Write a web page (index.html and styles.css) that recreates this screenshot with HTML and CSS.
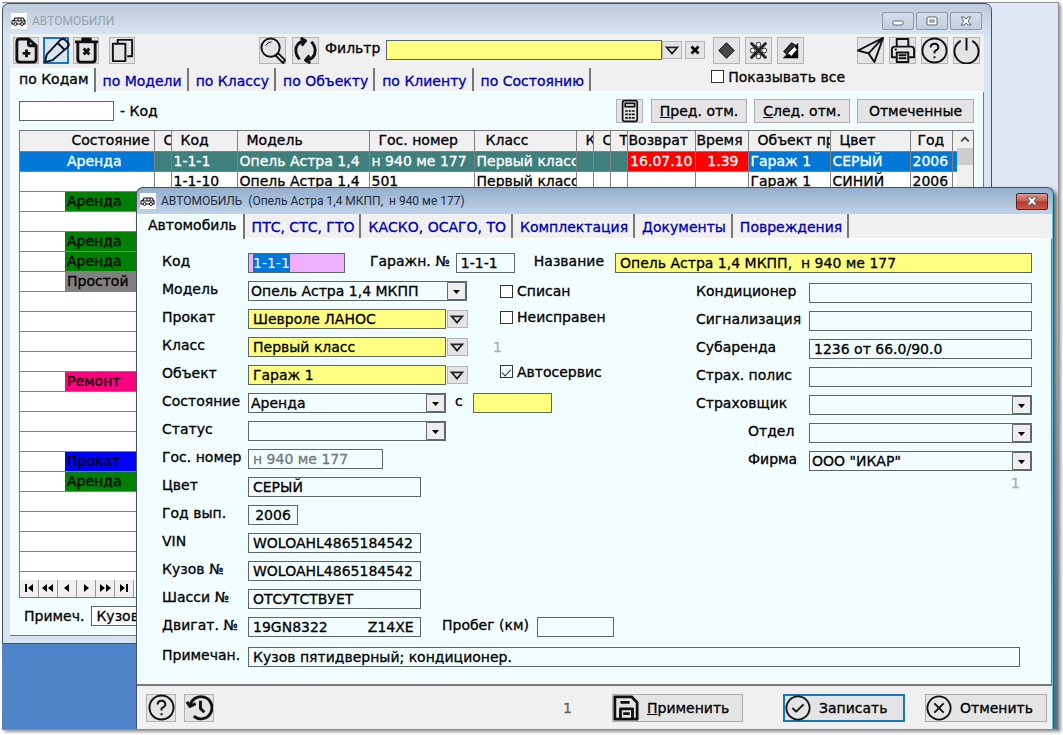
FILE: index.html
```html
<!DOCTYPE html>
<html lang="ru">
<head>
<meta charset="utf-8">
<title>Автомобили</title>
<link rel="stylesheet" href="styles.css">
</head>
<body>
<svg class="defs" aria-hidden="true">
  <symbol id="car" viewBox="0 0 16 16"><path d="M4 5h8l2 3v3H1V8l2-1zM4 5l-1 3h11M7 5v3M10 5v3" fill="none" stroke="#111" stroke-width="1.1"/><circle cx="4.500" cy="11" r="1.500" fill="#fff" stroke="#111"/><circle cx="11" cy="11" r="1.500" fill="#fff" stroke="#111"/></symbol>
  <symbol id="new" viewBox="0 0 28 28"><path d="M16 2H7Q4 2 4 5V23Q4 26 7 26H21Q24 26 24 23V9ZM16 2V7Q16 9 18 9H24M14 13V21M10 17H18" class="k3"/></symbol>
  <symbol id="edit" viewBox="0 0 28 28"><path d="M2 26L4 18L18 3Q20 1 23 3L26 6Q28 8 25 11L10 24ZM15 6L22 13" class="k2"/></symbol>
  <symbol id="trash" viewBox="0 0 28 28"><path d="M2 5H26M10 4V2H18V4M5 6V23Q5 26 8 26H20Q23 26 23 23V6M11 12L17 18M17 12L11 18" class="k3"/></symbol>
  <symbol id="copy" viewBox="0 0 28 28"><path d="M9 7V3H24V20H19M4 7H17V25H4Z" class="k2"/></symbol>
  <symbol id="find" viewBox="0 0 28 28"><circle cx="12" cy="11" r="9.500" class="k2"/><path d="M7 9Q9 5 13 5" class="k1"/><path d="M17 19L20 17L27 24L25 27Z" class="k2"/></symbol>
  <symbol id="reload" viewBox="0 0 28 28"><path d="M12 4Q4 6 4 14Q4 19 8 23M9 1L14 4L10 9M16 24Q24 22 24 14Q24 9 20 5M19 27L14 24L18 19" class="k3"/></symbol>
  <symbol id="tri" viewBox="0 0 20 18"><path d="M4 6H16L10 13Z" fill="#ddd" stroke="#222" stroke-width="2"/></symbol>
  <symbol id="cross" viewBox="0 0 20 18"><path d="M6 5L14 13M14 5L6 13" stroke="#000" stroke-width="3"/></symbol>
  <symbol id="diamond" viewBox="0 0 28 28"><path d="M14 6L22 14L14 22L6 14Z" fill="#484848" stroke="#000"/></symbol>
  <symbol id="unmark" viewBox="0 0 28 28"><g fill="#fff" stroke="#222"><circle cx="14" cy="8" r="2.500"/><circle cx="8" cy="14" r="2.500"/><circle cx="20" cy="14" r="2.500"/><circle cx="14" cy="20" r="2.500"/></g><path d="M6 6L22 22M22 6L6 22" stroke="#222" stroke-width="3"/></symbol>
  <symbol id="invert" viewBox="0 0 28 28"><path d="M6 22H22V6L14 14Z" fill="#000"/><path d="M7 15L15 6L20 9L11 19Z" fill="#333" stroke="#000"/><path d="M11 17L18 10L21 13L15 20Z" fill="#fff" stroke="#222"/></symbol>
  <symbol id="send" viewBox="0 0 28 28"><path d="M1 14L27 1L18 26L12 17ZM12 17L27 1" class="k2"/></symbol>
  <symbol id="print" viewBox="0 0 28 28"><path d="M8 10V2H20V10M7 21H3V13Q3 10 6 10H23Q26 10 26 13V21H21M8 16H20V26H8ZM10 19H18M10 22H18M6 13H8" class="k2"/></symbol>
  <symbol id="help" viewBox="0 0 28 28"><circle cx="14" cy="14" r="12.500" class="k2"/><path d="M10 11Q10 7 14 7Q18 7 18 11Q18 13 14 15V17M14 20V22" class="k2"/></symbol>
  <symbol id="power" viewBox="0 0 28 28"><path d="M8 4A12.500 12.500 0 1 0 20 4M14 1V14" class="k2"/></symbol>
  <symbol id="calc" viewBox="0 0 28 28"><rect x="6" y="2" width="17" height="24" rx="2" class="k2"/><path d="M9 5H20V9H9Z" fill="#fff" stroke="#111" stroke-width="2"/><path d="M9 14H20M9 18H20M9 22H20" stroke="#111" stroke-width="2" stroke-dasharray="3 1"/></symbol>
  <symbol id="history" viewBox="0 0 28 28"><path d="M4 13A11.500 11.500 0 1 1 8 23M1 8L4 13L10 10M15 7V15L19 19" class="k3"/></symbol>
  <symbol id="save" viewBox="0 0 28 28"><path d="M2 2H20L26 8V26H2ZM8 26V15H21V26M8 8H18M11 20H18" class="k3"/></symbol>
  <symbol id="ok" viewBox="0 0 28 28"><circle cx="14" cy="14" r="12.500" class="k2"/><path d="M8 14L12 18L20 10" class="k2"/></symbol>
  <symbol id="cancel" viewBox="0 0 28 28"><circle cx="14" cy="14" r="12.500" class="k2"/><path d="M9 9L19 19M19 9L9 19" class="k2"/></symbol>
</svg>

<div class="desktop">
<section class="window main-window">
  <header class="titlebar">
    <svg class="app-icon"><use href="#car"/></svg><span>АВТОМОБИЛИ</span>
    <div class="win-buttons">
      <button aria-label="Свернуть"><svg viewBox="0 0 14 12"><rect x="2" y="6" width="10" height="4" rx="1"/></svg></button>
      <button aria-label="Развернуть"><svg viewBox="0 0 14 12"><rect x="2" y="2" width="10" height="8" rx="1"/><rect x="5" y="5" width="4" height="2"/></svg></button>
      <button aria-label="Закрыть"><svg viewBox="0 0 14 12"><path d="M2 2H5L7 4L9 2H12L9 6L12 10H9L7 8L5 10H2L5 6Z"/></svg></button>
    </div>
  </header>
  <div class="client">
    <div class="toolbar">
      <div class="group"><button class="tool" aria-label="Новый"><svg><use href="#new"/></svg></button>
      <button class="tool focused" aria-label="Изменить"><svg><use href="#edit"/></svg></button>
      <button class="tool" aria-label="Удалить"><svg><use href="#trash"/></svg></button>
      <button class="tool apart" aria-label="Копировать"><svg><use href="#copy"/></svg></button></div>
      <div class="group wide"><button class="tool" aria-label="Найти"><svg><use href="#find"/></svg></button>
      <button class="tool" aria-label="Обновить"><svg><use href="#reload"/></svg></button></div>
      <label class="filter-label" for="filter">Фильтр</label>
      <input id="filter" class="field yellow filter">
      <button class="mini" aria-label="Выбрать фильтр"><svg><use href="#tri"/></svg></button>
      <button class="mini clear" aria-label="Очистить"><svg><use href="#cross"/></svg></button>
      <div class="group marks"><button class="tool" aria-label="Отметить"><svg><use href="#diamond"/></svg></button>
      <button class="tool" aria-label="Снять отметки"><svg><use href="#unmark"/></svg></button>
      <button class="tool" aria-label="Обратить"><svg><use href="#invert"/></svg></button></div>
      <div class="group end"><button class="tool" aria-label="Отправить"><svg><use href="#send"/></svg></button>
      <button class="tool" aria-label="Печать"><svg><use href="#print"/></svg></button>
      <button class="tool" aria-label="Справка"><svg><use href="#help"/></svg></button>
      <button class="tool" aria-label="Выход"><svg><use href="#power"/></svg></button></div>
    </div>
    <nav class="tabs">
      <button class="tab active">по Кодам</button><button class="tab">по Модели</button><button class="tab">по Классу</button><button class="tab">по Объекту</button><button class="tab">по Клиенту</button><button class="tab">по Состоянию</button>
      <label class="check show-all"><input type="checkbox">Показывать все</label>
    </nav>
    <div class="page">
      <div class="search">
        <input id="code" class="field white code"><label for="code">- Код</label>
        <div class="search-buttons">
          <button class="tool calc" aria-label="Калькулятор"><svg><use href="#calc"/></svg></button>
          <button class="button prev"><u>П</u>ред. отм.</button>
          <button class="button prev"><u>С</u>лед. отм.</button>
          <button class="button marked">Отмеченные</button>
        </div>
      </div>
      <div class="grid">
        <table>
          <colgroup><col class="w-state"><col class="w-s"><col class="w-code"><col class="w-model"><col class="w-num"><col class="w-class"><col class="w-s"><col class="w-s"><col class="w-s"><col class="w-ret"><col class="w-time"><col><col class="w-color"><col class="w-year"><col class="w-tail"></colgroup>
          <thead><tr><th class="right">Состояние</th><th>С</th><th>Код</th><th>Модель</th><th>Гос. номер</th><th class="far">Класс</th><th>К</th><th>С</th><th>Т</th><th class="near">Возврат</th><th class="near">Время</th><th>Объект пр</th><th>Цвет</th><th class="mid">Год</th><th></th></tr></thead>
          <tbody>
            <tr class="current"><td class="sel state">Аренда</td><td></td><td>1-1-1</td><td>Опель Астра 1,4</td><td>н 940 ме 177</td><td>Первый класс</td><td></td><td></td><td></td><td class="red">16.07.10</td><td class="red time">1.39</td><td class="sel">Гараж 1</td><td class="sel">СЕРЫЙ</td><td class="sel">2006</td><td class="sel"></td></tr>
            <tr><td></td><td></td><td>1-1-10</td><td>Опель Астра 1,4</td><td>501</td><td>Первый класс</td><td></td><td></td><td></td><td></td><td></td><td>Гараж 1</td><td>СИНИЙ</td><td>2006</td><td></td></tr>
            <tr><td class="state"><span class="rent">Аренда</span></td><td colspan="14"></td></tr>
            <tr><td colspan="15"></td></tr>
            <tr><td class="state"><span class="rent">Аренда</span></td><td colspan="14"></td></tr>
            <tr><td class="state"><span class="rent">Аренда</span></td><td colspan="14"></td></tr>
            <tr><td class="state"><span class="idle">Простой</span></td><td colspan="14"></td></tr>
            <tr><td colspan="15"></td></tr><tr><td colspan="15"></td></tr><tr><td colspan="15"></td></tr><tr><td colspan="15"></td></tr>
            <tr><td class="state"><span class="repair">Ремонт</span></td><td colspan="14"></td></tr>
            <tr><td colspan="15"></td></tr><tr><td colspan="15"></td></tr><tr><td colspan="15"></td></tr>
            <tr><td class="state"><span class="hire">Прокат</span></td><td colspan="14"></td></tr>
            <tr><td class="state"><span class="rent">Аренда</span></td><td colspan="14"></td></tr>
            <tr><td colspan="15"></td></tr><tr><td colspan="15"></td></tr><tr><td colspan="15"></td></tr><tr><td colspan="15"></td></tr>
          </tbody>
        </table>
        <div class="scroll"><svg viewBox="0 0 16 18"><path d="M4 11L8 7L12 11" fill="none" stroke="#444" stroke-width="2"/></svg><div class="thumb"></div></div>
      </div>
      <div class="navigator">
        <button aria-label="В начало"><svg viewBox="0 0 18 16"><path d="M5 4H7V12H5ZM13 4V12L8 8Z"/></svg></button>
        <button aria-label="Страница назад"><svg viewBox="0 0 18 16"><path d="M8 4V12L3 8ZM14 4V12L9 8Z"/></svg></button>
        <button aria-label="Назад"><svg viewBox="0 0 18 16"><path d="M11 4V12L6 8Z"/></svg></button>
        <button aria-label="Вперёд"><svg viewBox="0 0 18 16"><path d="M7 4V12L12 8Z"/></svg></button>
        <button aria-label="Страница вперёд"><svg viewBox="0 0 18 16"><path d="M4 4V12L9 8ZM10 4V12L15 8Z"/></svg></button>
        <button aria-label="В конец"><svg viewBox="0 0 18 16"><path d="M5 4V12L10 8ZM11 4H13V12H11Z"/></svg></button>
      </div>
      <div class="note"><label for="note">Примеч.</label><input id="note" class="field white" value="Кузов пятидверный; кондиционер."></div>
    </div>
  </div>
</section>

<section class="window dialog">
  <header class="titlebar">
    <svg class="app-icon"><use href="#car"/></svg><span>АВТОМОБИЛЬ &nbsp;(Опель Астра 1,4 МКПП, &nbsp;н 940 ме 177)</span>
    <button class="close" aria-label="Закрыть"><svg viewBox="0 0 14 12"><path d="M2 2H5L7 4L9 2H12L9 6L12 10H9L7 8L5 10H2L5 6Z"/></svg></button>
  </header>
  <nav class="tabs">
    <button class="tab active">Автомобиль</button><button class="tab">ПТС, СТС, ГТО</button><button class="tab">КАСКО, ОСАГО, ТО</button><button class="tab">Комплектация</button><button class="tab">Документы</button><button class="tab">Повреждения</button>
  </nav>
  <form class="form">
    <div class="row">
      <label class="name" for="f-code">Код</label><input id="f-code" class="field pink w97" value="1-1-1">
      <label class="garage" for="f-gar">Гаражн. №</label><input id="f-gar" class="field w59" value="1-1-1">
      <label class="title" for="f-title">Название</label><input id="f-title" class="field yellow grow" value="Опель Астра 1,4 МКПП,  н 940 ме 177">
    </div>
    <div class="columns">
      <div class="left">
        <div class="row"><label class="name" for="f-model">Модель</label><select id="f-model" class="field w219"><option>Опель Астра 1,4 МКПП</option></select><label class="check c1"><input type="checkbox">Списан</label></div>
        <div class="row"><label class="name" for="f-tar">Прокат</label><input id="f-tar" class="field yellow w198" value="Шевроле ЛАНОС"><button type="button" class="mini" aria-label="Выбрать"><svg><use href="#tri"/></svg></button><label class="check c2"><input type="checkbox">Неисправен</label></div>
        <div class="row"><label class="name" for="f-class">Класс</label><input id="f-class" class="field yellow w198" value="Первый класс"><button type="button" class="mini" aria-label="Выбрать"><svg><use href="#tri"/></svg></button><span class="count">1</span></div>
        <div class="row"><label class="name" for="f-obj">Объект</label><input id="f-obj" class="field yellow w198" value="Гараж 1"><button type="button" class="mini" aria-label="Выбрать"><svg><use href="#tri"/></svg></button><label class="check c2 raised"><input type="checkbox" checked>Автосервис</label></div>
        <div class="row"><label class="name" for="f-state">Состояние</label><select id="f-state" class="field w198"><option>Аренда</option></select><label class="since" for="f-since">с</label><input id="f-since" class="field yellow w79"></div>
        <div class="row"><label class="name" for="f-status">Статус</label><select id="f-status" class="field w198"><option></option></select></div>
        <div class="row"><label class="name" for="f-num">Гос. номер</label><input id="f-num" class="field dim w135" value="н 940 ме 177"></div>
        <div class="row"><label class="name" for="f-color">Цвет</label><input id="f-color" class="field w173" value="СЕРЫЙ"></div>
        <div class="row"><label class="name" for="f-year">Год вып.</label><input id="f-year" class="field center w50" value="2006"></div>
        <div class="row"><label class="name" for="f-vin">VIN</label><input id="f-vin" class="field w173" value="WOLOAHL4865184542"></div>
        <div class="row"><label class="name" for="f-body">Кузов №</label><input id="f-body" class="field w173" value="WOLOAHL4865184542"></div>
        <div class="row"><label class="name" for="f-chas">Шасси №</label><input id="f-chas" class="field w173" value="ОТСУТСТВУЕТ"></div>
        <div class="row"><label class="name" for="f-eng">Двигат. №</label><input id="f-eng" class="field w173" value="19GN8322         Z14XE"><label class="run" for="f-run">Пробег (км)</label><input id="f-run" class="field w77"></div>
      </div>
      <div class="right-col">
        <div class="row"><label class="rname" for="r1">Кондиционер</label><input id="r1" class="field w223"></div>
        <div class="row"><label class="rname" for="r2">Сигнализация</label><input id="r2" class="field w223"></div>
        <div class="row"><label class="rname" for="r3">Субаренда</label><input id="r3" class="field w223" value="1236 от 66.0/90.0"></div>
        <div class="row"><label class="rname" for="r4">Страх. полис</label><input id="r4" class="field w223"></div>
        <div class="row"><label class="rname" for="r5">Страховщик</label><select id="r5" class="field w223"><option></option></select></div>
        <div class="row"><label class="rname inset" for="r6">Отдел</label><select id="r6" class="field w223"><option></option></select></div>
        <div class="row"><label class="rname inset" for="r7">Фирма</label><select id="r7" class="field w223"><option>ООО "ИКАР"</option></select></div>
        <div class="total">1</div>
      </div>
    </div>
    <div class="row last"><label class="name" for="f-note">Примечан.</label><input id="f-note" class="field grow" value="Кузов пятидверный; кондиционер."></div>
  </form>
  <footer class="footer">
    <button class="tool big" aria-label="Справка"><svg><use href="#help"/></svg></button>
    <button class="tool big" aria-label="История"><svg><use href="#history"/></svg></button>
    <span class="record">1</span>
    <button class="button action apply"><svg><use href="#save"/></svg><span><u>П</u>рименить</span></button>
    <button class="button action write"><svg><use href="#ok"/></svg><span>Записать</span></button>
    <button class="button action"><svg><use href="#cancel"/></svg><span>Отменить</span></button>
  </footer>
</section>
</div>
<script src="app.js"></script>
</body>
</html>
```
FILE: app.js
```js
const code = document.getElementById('f-code');
code.focus();
code.select();
```
FILE: styles.css
```css
* { box-sizing: border-box; }
body { margin: 0; height: 100vh; padding: 2px 4px 5px 2px; background: #fff; color: #000; font: 14px/20px "DejaVu Sans", sans-serif; overflow: hidden; -webkit-text-stroke: 0.3px; }
button, input, select { font: inherit; color: inherit; margin: 0; padding: 0; -webkit-text-stroke: inherit; }
button { border: 0; background: none; white-space: nowrap; }
svg { display: block; }
.defs { position: absolute; width: 0; height: 0; }
.k1, .k2, .k3 { fill: none; stroke: #111; stroke-linejoin: round; }
.k1 { stroke-width: 1; }
.k2 { stroke-width: 2; }
.k3 { stroke-width: 3; }

.desktop { position: relative; height: 100%; overflow: hidden; background: linear-gradient(#dfe8f5 0, #dfe8f5 300px, #4e84c8 600px); border: 1px solid #8a8f96; border-left: 0; box-shadow: 2px 2px 3px #999; }
.window { position: absolute; border: 1px solid #46525e; border-radius: 7px 7px 0 0; }
.main-window { left: 0; top: 0; right: 66px; padding: 0 7px 7px; background: linear-gradient(#bccadb, #d7e4f2 32px); }
.titlebar { display: flex; align-items: center; font: 12px/16px Roboto, "Open Sans", sans-serif; -webkit-text-stroke: 0; }
.main-window .titlebar { height: 30px; padding: 4px 1px 0 1px; color: #98a2ad; }
.app-icon { width: 16px; height: 16px; margin-right: 5px; background: #fff; }
.win-buttons { margin-left: auto; display: flex; gap: 2px; padding-right: 1px; }
.win-buttons button { width: 32px; height: 18px; border: 1px solid #8c9cae; border-radius: 2px; display: grid; place-items: center; background: linear-gradient(#d2ddea, #c1cfdf); }
.win-buttons svg, .close svg { width: 14px; height: 12px; fill: #fff; stroke: #5d6875; }

.client { background: #f0f0f0; }
.toolbar { display: flex; align-items: center; height: 34px; padding: 0 4px 2px 3px; }
.group { display: flex; gap: 4px; }
.group.wide { gap: 6px; margin-left: 124px; }
.group.marks { gap: 5px; margin-left: 8px; }
.group.end { gap: 5px; margin-left: 53px; }
.tool { width: 27px; height: 27px; flex: none; border: 1px solid #b4b4b4; background: #e4e4e4; display: flex; align-items: center; justify-content: center; }
.group:not(.wide):not(.marks):not(.end) .tool { width: 26px; }
.tool.focused { border: 2px solid #1878bd; background: #d5e5f1; }
.tool svg { width: 27px; height: 27px; flex: none; }
.tool.apart { margin-left: 6px; }
.filter-label { margin: 0 6px 4px; }
.field { height: 20px; border: 1px solid #5b6767; border-radius: 0; background-color: #f2fdff; padding: 0 4px; outline: 0; flex: none; min-width: 0; }
.yellow { background-color: #ffff80; }
.white { background-color: #fff; }
.filter { flex: 1; }
.mini { width: 20px; height: 18px; flex: none; border: 1px solid #b4b4b4; background: #e4e4e4; }
.mini svg { width: 18px; height: 16px; }
.mini.clear { margin-left: 3px; }

.tabs { display: flex; align-items: stretch; height: 24px; background: #f0f0f0; border-bottom: 1px solid #fff; }
.tab { padding: 2px 5px 0 7px; color: #0000b0; border-right: 2px solid #777; }
.tab.active { color: #000; background: #f2fdff; padding: 0 5px 3px 9px; margin-bottom: -1px; }
.check { display: inline-flex; align-items: center; white-space: nowrap; }
.check input { appearance: none; width: 13px; height: 13px; margin: 0 4px 0 0; border: 1px solid #333; background: #fff; flex: none; }
.check input:checked { background: #f2fdff; display: grid; place-items: center; }
.check input:checked::after { content: ""; width: 8px; height: 4px; border: solid #333; border-width: 0 0 1px 1px; transform: rotate(-45deg); }
.show-all { margin: 0 139px 6px auto; }

.page { background: #f2fdff; padding: 7px 9px 7px 9px; border-right: 1px solid #777; border-bottom: 1px solid #777; }
.search { display: flex; align-items: center; height: 24px; gap: 6px; }
.code { width: 95px; }
.search-buttons { display: flex; margin-left: auto; gap: 7px; }
.search-buttons .tool { margin-right: 1px; height: 24px; }
.tool.calc svg { height: 24px; }
.button { border: 1px solid #adadad; background: #e4e4e4; height: 24px; }
.prev { width: 96px; }
.marked { width: 117px; }
.grid { display: flex; margin-top: 7px; border: 1px solid #777; border-bottom: 0; background: #fff; }
.grid table { flex: 1; table-layout: fixed; border-collapse: collapse; width: 100%; }
.w-state { width: 134px; } .w-s { width: 17px; } .w-code { width: 66px; } .w-model { width: 132px; } .w-num { width: 105px; } .w-class { width: 102px; } .w-ret { width: 68px; } .w-time { width: 53px; } .w-color { width: 80px; } .w-year { width: 42px; } .w-tail { width: 5px; }
th, td { height: 20px; line-height: 19px; padding: 0 0 0 2px; overflow: hidden; white-space: nowrap; text-align: left; font-weight: 400; border: 1px solid #808080; }
tr > :first-child { border-left: 0; }
tr > :last-child { border-right: 0; }
thead th { background: #f0f0f0; border-top: 0; padding-left: 9px; }
th.right { text-align: right; padding-right: 4px; }
th.far { padding-left: 11px; }
thead th.near { padding-left: 1px; }
th.mid { padding-left: 7px; }
td.state { padding-left: 45px; }
.current td { background: #40807c; color: #fff; }
.current td.sel { background: #0078d7; }
.current td.sel.state { padding-left: 47px; }
.current td.red { background: #f00; text-align: right; padding-right: 2px; }
.current td.time { padding-right: 9px; }
.state span { display: block; padding-left: 2px; }
.rent { background: #008000; }
.idle { background: #808080; }
.repair { background: #ff0080; }
.hire { background: #00f; }
.scroll { width: 16px; background: #f0f0f0; }
.scroll svg { width: 16px; height: 17px; }
.thumb { height: 17px; background: #cdcdcd; }
.navigator { display: flex; height: 26px; padding-top: 8px; background: #fff; border: 1px solid #777; border-top: 0; }
.navigator button { width: 19px; background: #f0f0f0; border-right: 1px solid #999; }
.navigator svg { width: 18px; height: 16px; }
.note { display: flex; gap: 7px; margin: 8px 0 0 5px; }
.note label { padding-bottom: 2px; }
.note .field { flex: 1; }

.dialog { left: 134px; top: 184px; right: 4px; bottom: 0; border-bottom: 0; display: flex; flex-direction: column; background: linear-gradient(#94afcd, #bed1e6 25px); padding-right: 1px; box-shadow: inset -1px 0 #55cbe8, 3px 3px 4px #666; }
.dialog .titlebar { height: 26px; padding: 0 4px 0 3px; color: #222d40; flex: none; }
.close { margin-left: auto; width: 32px; height: 17px; border: 1px solid #5c2020; border-radius: 2px; background: linear-gradient(#dd9b93, #c65a4e 48%, #b3382a 52%, #d0594a); display: grid; place-items: center; }
.form { flex: 1; background: #f2fdff; padding: 14px 19px 0 25px; border-bottom: 2px solid #777; border-right: 1px solid #777; display: flex; flex-direction: column; gap: 8px; }
.dialog .tabs { height: 25px; flex: none; }
.dialog .tab.active { padding: 0 6px 3px 11px; }
.columns { display: flex; justify-content: space-between; }
.left, .right-col { display: flex; flex-direction: column; gap: 8px; }
.right-col { padding-top: 2px; }
.row { display: flex; align-items: center; height: 20px; white-space: nowrap; }
.row > label:not(.check) { padding-bottom: 4px; }
.name { width: 86px; flex: none; }
.rname { width: 113px; flex: none; }
.inset { padding-left: 52px; }
.garage { margin: 0 6px 0 25px; }
.title { margin: 0 11px 0 19px; }
.since { margin: 0 10px 0 9px; }
.run { margin: 0 8px 0 21px; }
.pink { background-color: #f0b0ff; }
.pink::selection { background: #0078d7; color: #fff; }
.dim { color: #707878; }
.center { text-align: center; }
.grow { flex: 1; }
.row input { white-space: pre; }
.w50 { width: 50px; } .w59 { width: 59px; } .w77 { width: 77px; } .w79 { width: 79px; } .w97 { width: 97px; } .w135 { width: 135px; } .w173 { width: 173px; } .w198 { width: 198px; } .w219 { width: 219px; } .w223 { width: 223px; }
select.field { appearance: none; padding: 0 20px 0 2px; background: #f2fdff url("data:image/svg+xml,%3Csvg xmlns='http://www.w3.org/2000/svg' width='19' height='18'%3E%3Cpath d='M.5 .5H18.500V17.500H.5Z' fill='%23eee' stroke='%23667'/%3E%3Cpath d='M6 8H13L9.500 12Z'/%3E%3C/svg%3E") right center no-repeat; line-height: 18px; }
.row .mini { margin-left: 1px; width: 21px; }
.c1 { margin-left: 33px; }
.c2 { margin-left: 32px; align-self: flex-start; line-height: 16px; }
.raised { line-height: 8px; }
.count, .total { color: #a8b0b0; }
.count { margin-left: 25px; }
.total { text-align: right; padding-right: 12px; line-height: 8px; }
.last { margin: 2px 12px 0 0; }
.footer { display: flex; align-items: center; height: 43px; flex: none; background: #f0f0f0; padding: 0 5px 0 9px; gap: 8px; }
.tool.big { width: 30px; height: 28px; }
.record { margin: 0 32px 0 auto; color: #666; }
.action { display: flex; align-items: center; width: 122px; height: 28px; gap: 8px; }
.action svg { width: 26px; height: 26px; flex: none; }
.apply { width: 131px; margin-right: 32px; }
.write { border: 2px solid #1878bd; margin-right: 12px; }
```
